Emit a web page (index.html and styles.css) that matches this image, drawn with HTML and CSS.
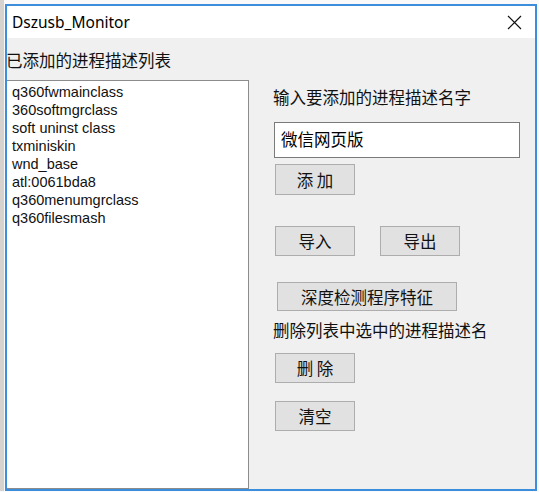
FILE: index.html
```html
<!DOCTYPE html>
<html lang="zh">
<head>
  <meta charset="UTF-8">
  <title>Dszusb_Monitor</title>
  <link rel="stylesheet" href="styles.css">
</head>
<body>
  <div class="window">
    <div class="titlebar">
      <span class="title">Dszusb_Monitor</span>
      <svg class="close" width="15" height="15" viewBox="0 0 15 15">
        <path d="M1 1 L14 14 M14 1 L1 14" stroke="#111" stroke-width="1.2" fill="none"/>
      </svg>
    </div>

    <div class="client">
      <div class="left-col">
        <div class="label list-label">已添加的进程描述列表</div>
        <div class="listbox">
          <div class="item">q360fwmainclass</div>
          <div class="item">360softmgrclass</div>
          <div class="item">soft uninst class</div>
          <div class="item">txminiskin</div>
          <div class="item">wnd_base</div>
          <div class="item">atl:0061bda8</div>
          <div class="item">q360menumgrclass</div>
          <div class="item">q360filesmash</div>
        </div>
      </div>

      <div class="right-col">
        <div class="label">输入要添加的进程描述名字</div>
        <div class="textbox">微信网页版</div>
        <button class="btn btn-add">添 加</button>
        <div class="btn-row">
          <button class="btn">导入</button>
          <button class="btn">导出</button>
        </div>
        <button class="btn btn-wide">深度检测程序特征</button>
        <div class="label label-del">删除列表中选中的进程描述名</div>
        <button class="btn btn-del">删 除</button>
        <button class="btn btn-clear">清空</button>
      </div>
    </div>
  </div>
</body>
</html>
```

FILE: styles.css
```css
* {
  margin: 0;
  padding: 0;
  box-sizing: border-box;
}

body {
  background-color: #fafafa;
  border-left: 4px solid #d6d3ce;
  font-family: "Noto Sans CJK SC", "Noto Sans", sans-serif;
  color: #000;
  overflow: hidden;
}

.window {
  margin: 4px 0 0 1px;
  width: 532px;
  height: 487px;
  border: 2px solid #3c8ddc;
  display: flex;
  flex-direction: column;
  background-color: #f0f0f0;
}

.titlebar {
  height: 32px;
  flex: none;
  background-color: #fff;
  display: flex;
  align-items: center;
  justify-content: space-between;
  padding: 0 13px 0 5px;
}

.title {
  font-family: "Noto Sans", sans-serif;
  font-size: 15.5px;
}

.client {
  flex: 1;
  display: flex;
  min-height: 0;
}

.left-col {
  width: 242px;
  display: flex;
  flex-direction: column;
}

.label {
  font-size: 16.5px;
  line-height: 20px;
  white-space: nowrap;
  color: #111;
}

.list-label {
  margin-top: 12px;
  margin-left: -1px;
}

.listbox {
  flex: 1;
  margin-top: 10px;
  background-color: #fff;
  border: 1px solid #8c8c8c;
  border-left: none;
  padding: 2px 0 0 5px;
}

.item {
  font-family: "Liberation Sans", Arial, sans-serif;
  font-size: 14.5px;
  line-height: 18px;
  color: #111;
}

.right-col {
  margin-left: 24px;
  padding-top: 49px;
  display: flex;
  flex-direction: column;
  align-items: flex-start;
}

.textbox {
  margin-top: 15px;
  margin-left: 1px;
  width: 246px;
  height: 36px;
  background-color: #fff;
  border: 1px solid #7a7a7a;
  padding-left: 6px;
  font-size: 16.5px;
  line-height: 32px;
}

.btn {
  width: 80px;
  height: 30px;
  background-color: #e1e1e1;
  border: 1px solid #adadad;
  font-family: "Noto Sans CJK SC", sans-serif;
  font-size: 16.5px;
  color: #111;
}

.btn-add {
  margin: 6px 0 0 2px;
  height: 31px;
}

.btn-row {
  margin: 31px 0 0 2px;
  display: flex;
  gap: 25px;
}

.btn-wide {
  margin: 26px 0 0 4px;
  width: 180px;
  height: 29px;
}

.label-del {
  margin-top: 9px;
}

.btn-del {
  margin: 13px 0 0 2px;
}

.btn-clear {
  margin: 18px 0 0 2px;
}
```
